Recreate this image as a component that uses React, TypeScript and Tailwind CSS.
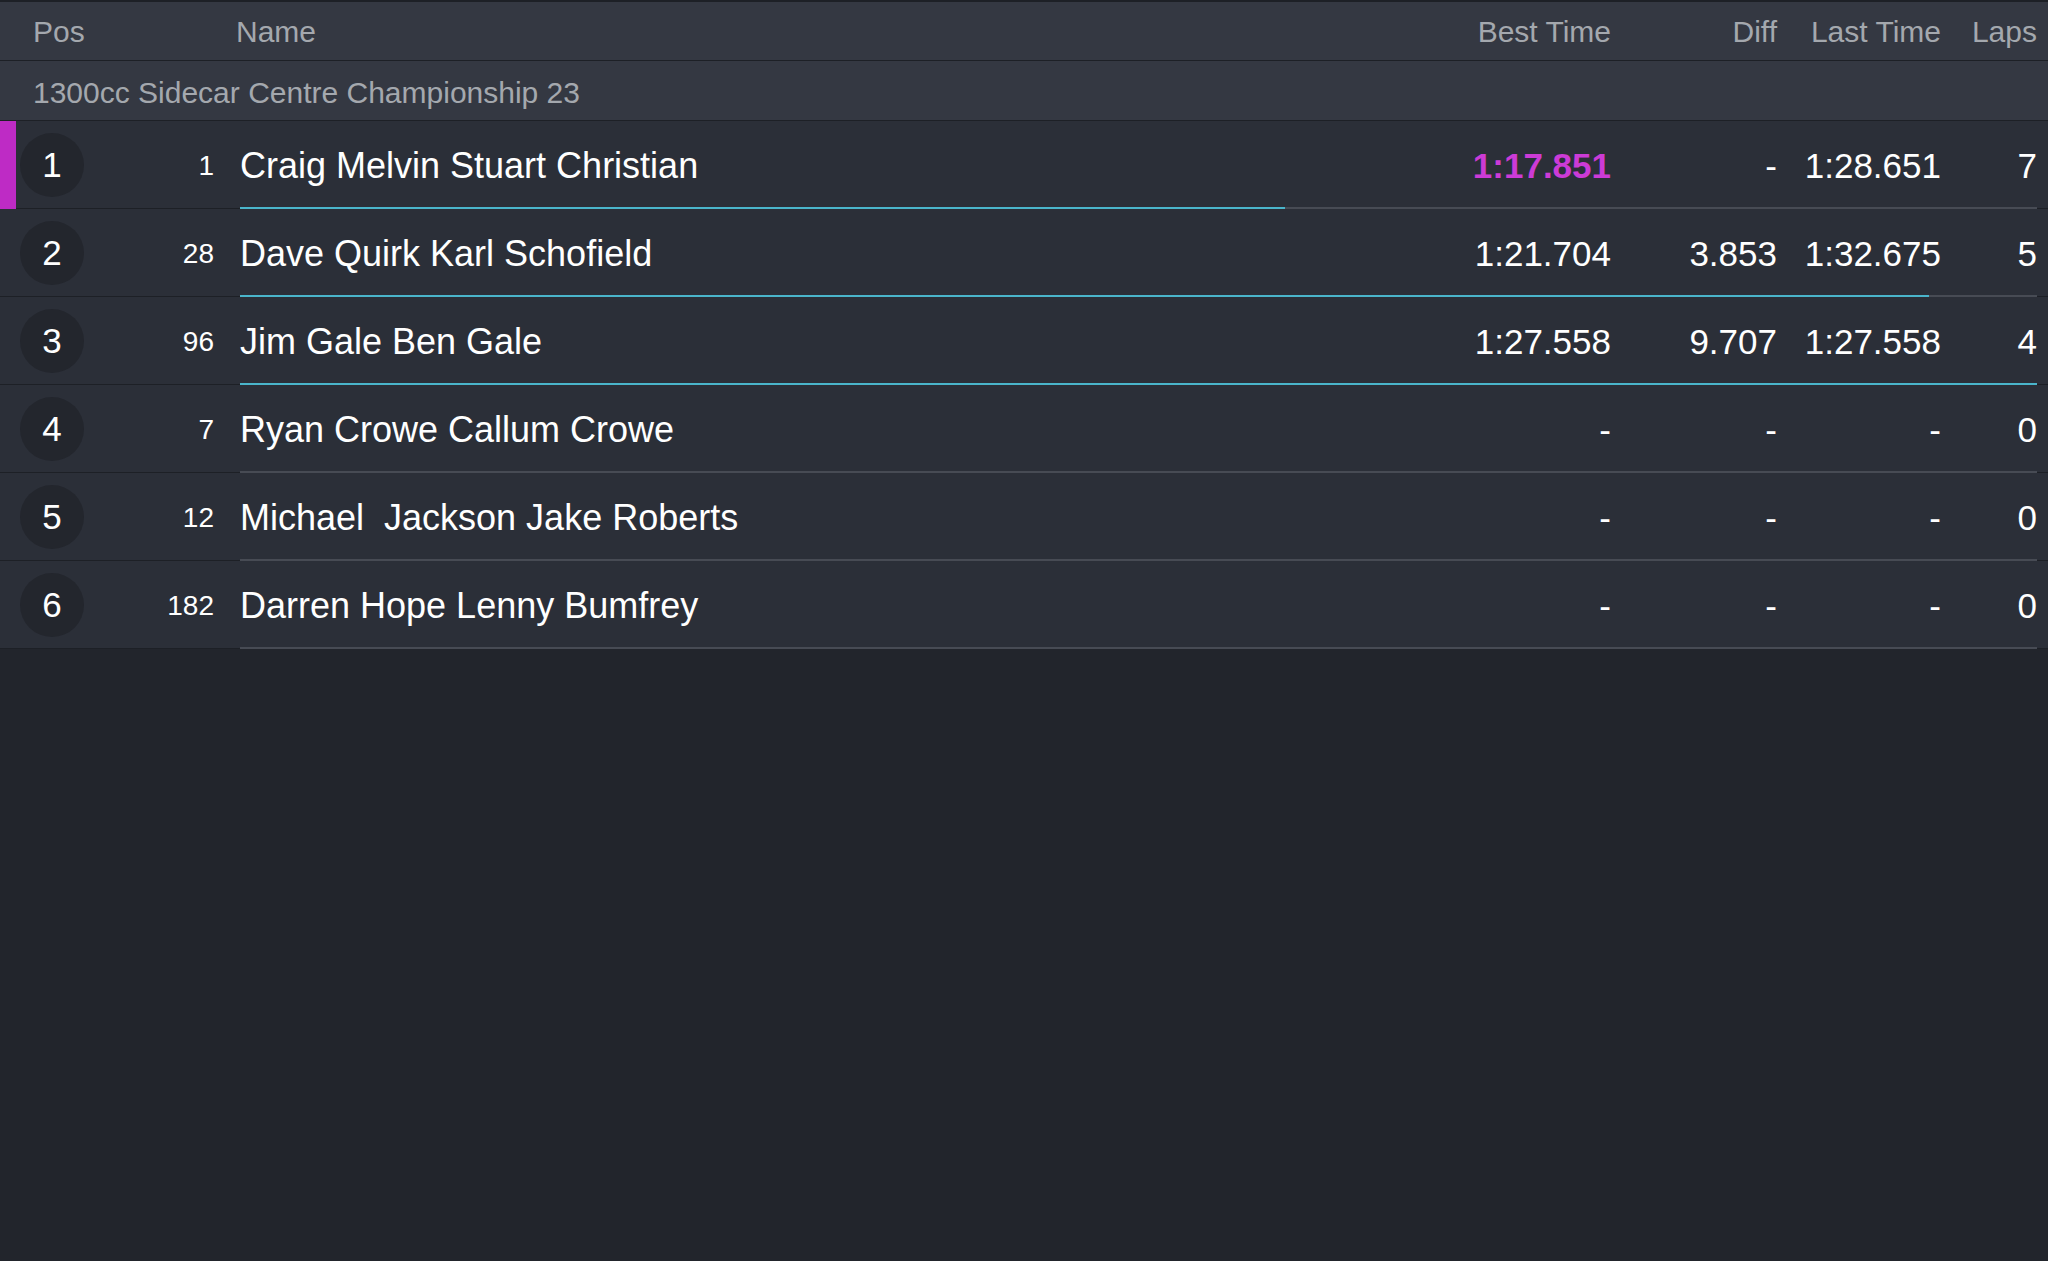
const rows = [
  { pos: 1, num: "1", name: "Craig Melvin Stuart Christian", best: "1:17.851", diff: "-", last: "1:28.651", laps: "7", progress: 58.15, fastest: true },
  { pos: 2, num: "28", name: "Dave Quirk Karl Schofield", best: "1:21.704", diff: "3.853", last: "1:32.675", laps: "5", progress: 94 },
  { pos: 3, num: "96", name: "Jim Gale Ben Gale", best: "1:27.558", diff: "9.707", last: "1:27.558", laps: "4", progress: 100 },
  { pos: 4, num: "7", name: "Ryan Crowe Callum Crowe", best: "-", diff: "-", last: "-", laps: "0", progress: 0 },
  { pos: 5, num: "12", name: "Michael  Jackson Jake Roberts", best: "-", diff: "-", last: "-", laps: "0", progress: 0 },
  { pos: 6, num: "182", name: "Darren Hope Lenny Bumfrey", best: "-", diff: "-", last: "-", laps: "0", progress: 0 },
];

type Row = (typeof rows)[number] & { fastest?: boolean };

const ResultRow = ({ row }: { row: Row }) => {
  return (
    <div className="flex h-[88px] bg-[#2b2f38] text-white">
      <div className="flex w-[240px] shrink-0 items-center border-b border-[#1d2026]">
        <div className={`-mb-px w-4 shrink-0 self-stretch ${row.fastest ? "bg-[#be2bc5]" : ""}`} />
        <div className="ml-1 flex h-16 w-16 shrink-0 items-center justify-center rounded-full bg-[#23262d] pt-[2px] text-[35px]">
          {row.pos}
        </div>
        <div className="w-[130px] pt-[3px] text-right text-[28px]">{row.num}</div>
      </div>

      <div className="relative flex flex-1 items-center border-b-2 border-[#474b54] pt-[4px] text-[35px]">
        <div className="flex-1 whitespace-pre text-[36px]">{row.name}</div>
        <div className={`w-[200px] text-right ${row.fastest ? "font-bold text-[#cc3bd6]" : ""}`}>{row.best}</div>
        <div className="w-[166px] text-right">{row.diff}</div>
        <div className="w-[164px] text-right">{row.last}</div>
        <div className="w-[96px] text-right">{row.laps}</div>
        {row.progress > 0 ? (
          <div className="absolute -bottom-[2px] left-0 h-[2px] bg-[#4ab5cb]" style={{ width: `${row.progress}%` }} />
        ) : null}
      </div>

      <div className="w-[11px] shrink-0 border-b border-[#1d2026]" />
    </div>
  );
};

export default function App() {
  return (
    <div className="min-h-screen bg-[#22252c] font-['Liberation_Sans',Arial,sans-serif]">
      <div className="flex h-[61px] items-center border-t-2 border-b border-[#1d2026] bg-[#343842] text-[30px] text-[#a4a8ae]">
        <div className="w-[236px] shrink-0 pl-[33px]">Pos</div>
        <div className="flex-1">Name</div>
        <div className="w-[200px] text-right">Best Time</div>
        <div className="w-[166px] text-right">Diff</div>
        <div className="w-[164px] text-right">Last Time</div>
        <div className="w-[96px] text-right">Laps</div>
        <div className="w-[11px] shrink-0" />
      </div>

      <div className="flex h-[60px] items-center border-b border-[#1d2026] bg-[#343842] pl-[33px] pt-1 text-[30px] text-[#a4a8ae]">
        1300cc Sidecar Centre Championship 23
      </div>

      {rows.map((row) => (
        <ResultRow key={row.pos} row={row} />
      ))}
    </div>
  );
}
